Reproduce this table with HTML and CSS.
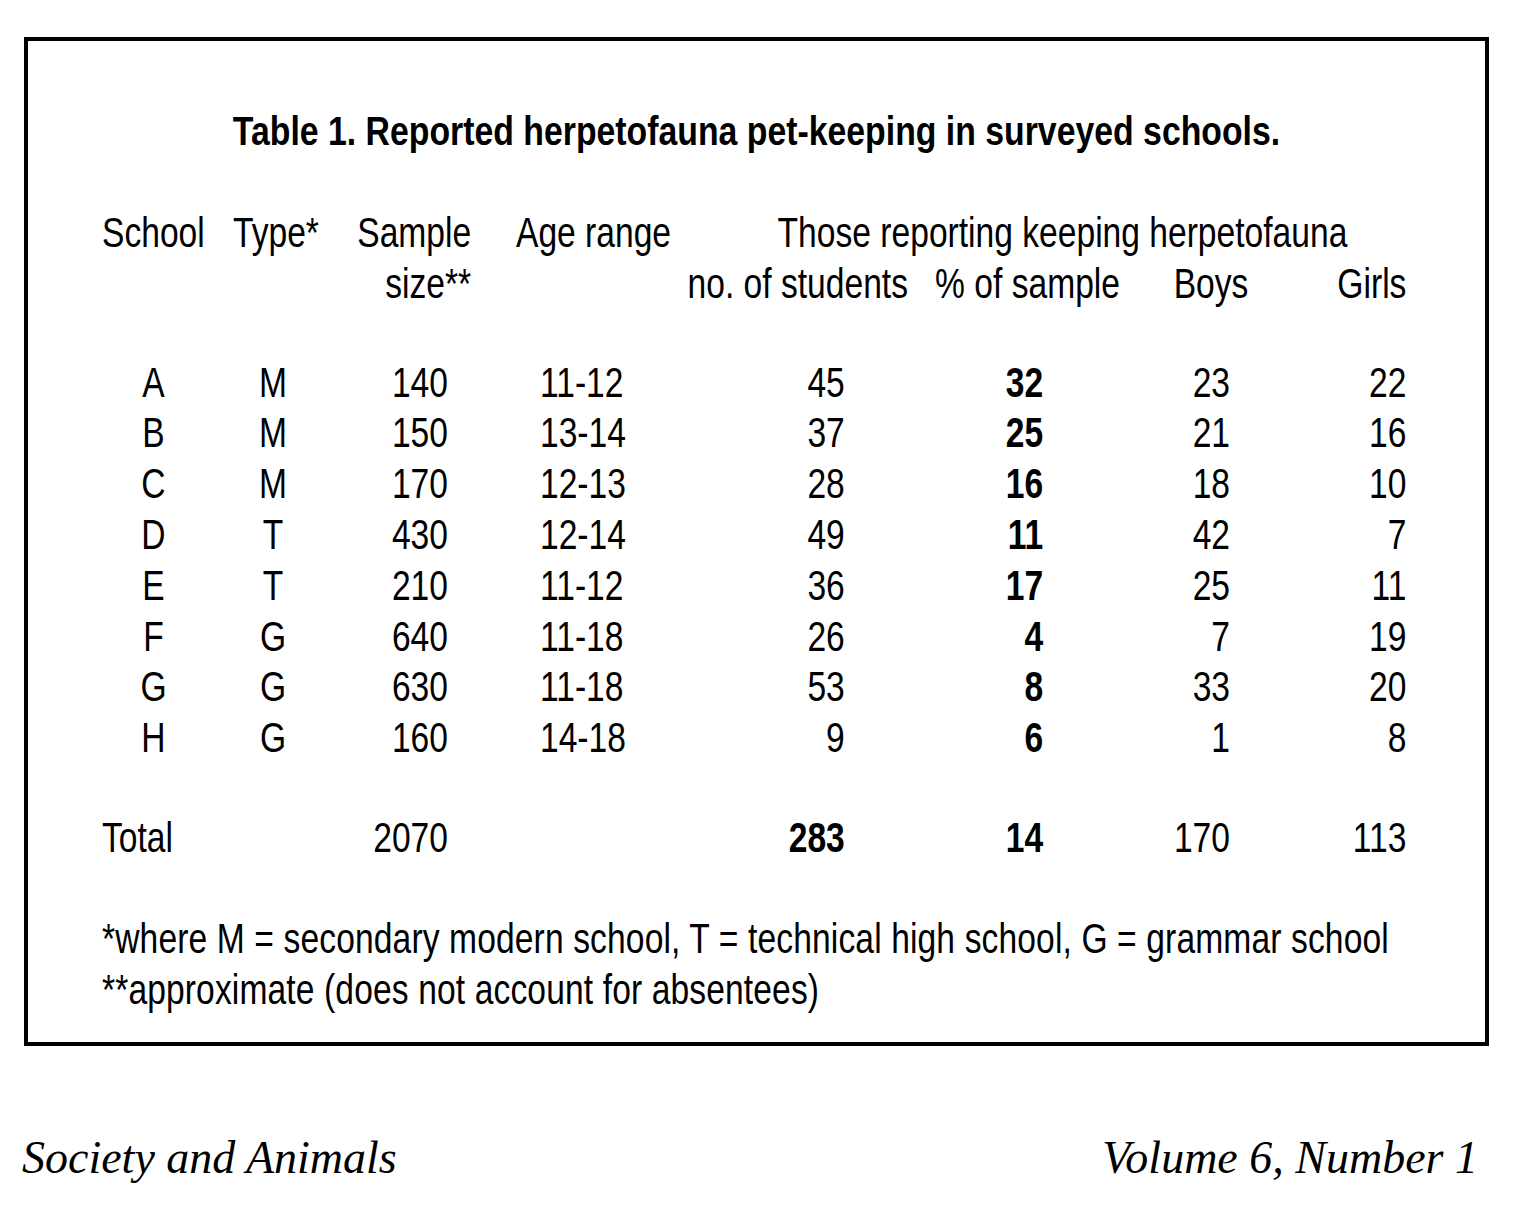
FILE: index.html
```html
<!DOCTYPE html>
<html lang="en">
<head>
<meta charset="utf-8">
<title>Table 1. Reported herpetofauna pet-keeping in surveyed schools.</title>
<link rel="stylesheet" href="styles.css">
</head>
<body>
<div class="box">
  <h1 class="title">Table 1. Reported herpetofauna pet-keeping in surveyed schools.</h1>
  <div class="narrow">
    <div class="cols thead">
      <div class="h1">School</div>
      <div class="h2">Type*</div>
      <div class="h3">Sample<br>size**</div>
      <div class="h4">Age range</div>
      <div class="hspan">Those reporting keeping herpetofauna</div>
      <div class="h5">no. of students</div>
      <div class="h6">% of sample</div>
      <div class="h7">Boys</div>
      <div class="h8">Girls</div>
    </div>
    <div class="cols tbody">
      <div class="c1">A</div><div class="c2">M</div><div class="c3">140</div><div class="c4">11-12</div><div class="c5">45</div><div class="c6">32</div><div class="c7">23</div><div class="c8">22</div>
      <div class="c1">B</div><div class="c2">M</div><div class="c3">150</div><div class="c4">13-14</div><div class="c5">37</div><div class="c6">25</div><div class="c7">21</div><div class="c8">16</div>
      <div class="c1">C</div><div class="c2">M</div><div class="c3">170</div><div class="c4">12-13</div><div class="c5">28</div><div class="c6">16</div><div class="c7">18</div><div class="c8">10</div>
      <div class="c1">D</div><div class="c2">T</div><div class="c3">430</div><div class="c4">12-14</div><div class="c5">49</div><div class="c6">11</div><div class="c7">42</div><div class="c8">7</div>
      <div class="c1">E</div><div class="c2">T</div><div class="c3">210</div><div class="c4">11-12</div><div class="c5">36</div><div class="c6">17</div><div class="c7">25</div><div class="c8">11</div>
      <div class="c1">F</div><div class="c2">G</div><div class="c3">640</div><div class="c4">11-18</div><div class="c5">26</div><div class="c6">4</div><div class="c7">7</div><div class="c8">19</div>
      <div class="c1">G</div><div class="c2">G</div><div class="c3">630</div><div class="c4">11-18</div><div class="c5">53</div><div class="c6">8</div><div class="c7">33</div><div class="c8">20</div>
      <div class="c1">H</div><div class="c2">G</div><div class="c3">160</div><div class="c4">14-18</div><div class="c5">9</div><div class="c6">6</div><div class="c7">1</div><div class="c8">8</div>
    </div>
    <div class="cols ttotal">
      <div class="tlabel">Total</div><div></div><div class="c3">2070</div><div></div><div class="c5 strong">283</div><div class="c6">14</div><div class="c7">170</div><div class="c8">113</div>
    </div>
    <div class="notes">
      <p>*where M = secondary modern school, T = technical high school, G = grammar school</p>
      <p>**approximate (does not account for absentees)</p>
    </div>
  </div>
</div>
<div class="footer">
  <span>Society and Animals</span>
  <span>Volume 6, Number 1</span>
</div>
</body>
</html>
```

FILE: styles.css
```css
html, body {
  margin: 0;
  padding: 0;
  background: #ffffff;
}

body {
  color: #000000;
  font-family: "Liberation Sans", Arial, sans-serif;
  font-size: 42px;
  width: 1530px;
  height: 1218px;
  overflow: hidden;
}

.box {
  margin: 37px 0 0 24px;
  border: 4px solid #000;
  padding: 65px 0 26px 74px;
  box-sizing: content-box;
  width: 1383px;
}

.title {
  margin: 0 0 52px -74px;
  width: 1457px;
  text-align: center;
  font-size: 40px;
  font-weight: bold;
  line-height: 50px;
  white-space: nowrap;
  transform: scaleX(0.845);
  transform-origin: 50% 50%;
}

/* condensed face: the body text is set in a narrow grotesque */
.narrow {
  width: 1647.5px;
  transform: scaleX(0.8);
  transform-origin: 0 0;
}

.cols {
  display: grid;
  grid-template-columns: 163.75px 146.25px 187.5px 225px 300px 275px 162.5px 187.5px;
  line-height: 50.8px;
  white-space: nowrap;
}

.thead {
  grid-template-rows: 50.8px 50.8px;
  margin-bottom: 48px;
}

.h1, .h2 { text-align: left; }
.h3 { grid-row: 1 / 3; grid-column: 3; text-align: right; padding-right: 36px; }
.h4 { text-align: left; padding-left: 20px; }
.hspan { grid-column: 5 / 9; text-align: left; padding-left: 122px; }
.h5 { grid-column: 5; grid-row: 2; text-align: right; padding-right: 15px; }
.h6 { grid-column: 6; grid-row: 2; text-align: right; padding-right: 25px; }
.h7 { grid-column: 7; grid-row: 2; text-align: right; padding-right: 27px; }
.h8 { grid-column: 8; grid-row: 2; text-align: right; padding-right: 17px; }

.tbody { margin-bottom: 48.6px; }

.c1 { text-align: center; padding-right: 35px; }
.c2 { text-align: center; padding-right: 46px; }
.c3 { text-align: right; padding-right: 65px; }
.c4 { text-align: left; padding-left: 50px; }
.c5 { text-align: right; padding-right: 94px; }
.c6 { text-align: right; padding-right: 121px; font-weight: bold; }
.c7 { text-align: right; padding-right: 50px; }
.c8 { text-align: right; padding-right: 17px; }
.strong { font-weight: bold; }
.tlabel { text-align: left; }

.ttotal { margin-bottom: 51px; }

.notes p {
  margin: 0;
  line-height: 50.8px;
  white-space: nowrap;
  letter-spacing: 0.15px;
}

.footer {
  display: flex;
  justify-content: space-between;
  margin-top: 82px;
  padding: 0 52px 0 22px;
  font-family: "Liberation Serif", "Times New Roman", serif;
  font-style: italic;
  font-size: 46px;
  line-height: 60px;
}
```
